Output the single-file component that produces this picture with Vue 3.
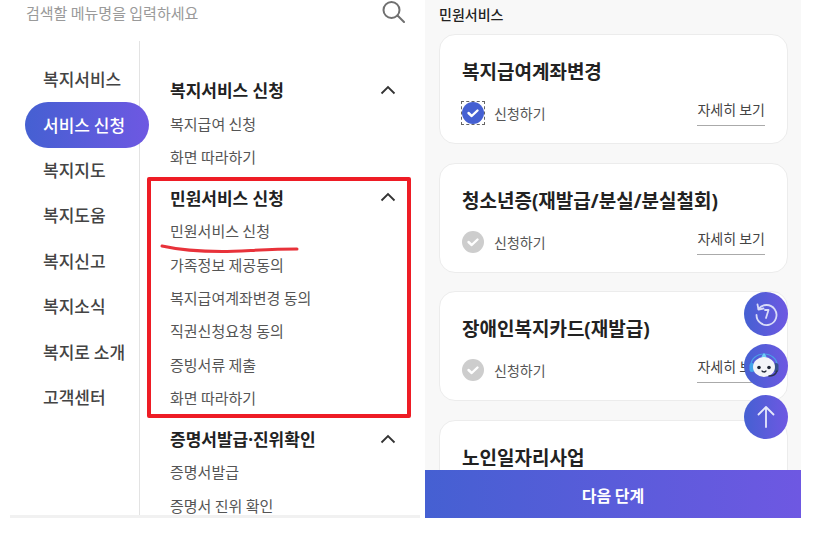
<script setup>
const sideMenu = ['복지서비스', '서비스 신청', '복지지도', '복지도움', '복지신고', '복지소식', '복지로 소개', '고객센터']

const groups = [
  { title: '복지서비스 신청', items: ['복지급여 신청', '화면 따라하기'] },
  {
    title: '민원서비스 신청',
    items: ['민원서비스 신청', '가족정보 제공동의', '복지급여계좌변경 동의', '직권신청요청 동의', '증빙서류 제출', '화면 따라하기'],
  },
  { title: '증명서발급·진위확인', items: ['증명서발급', '증명서 진위 확인'] },
]

const cards = [
  { title: '복지급여계좌변경', checked: true },
  { title: '청소년증(재발급/분실/분실철회)', checked: false },
  { title: '장애인복지카드(재발급)', checked: false },
  { title: '노인일자리사업', checked: false },
]
</script>

<template>
  <main class="page">
    <!-- Menu panel -->
    <section class="menu">
      <div class="search">
        <span class="placeholder">검색할 메뉴명을 입력하세요</span>
        <svg class="search-icon" width="23" height="22" viewBox="0 0 23 22" fill="none" stroke="#707070" stroke-width="2">
          <circle cx="9.500" cy="9" r="8" />
          <path d="M15.500 14.500l6.500 6.500" stroke-linecap="round" />
        </svg>
      </div>
      <div class="menu-body">
        <ul class="side">
          <li v-for="(m, i) in sideMenu" :key="m" class="side-item" :class="{ active: i === 1 }">{{ m }}</li>
        </ul>
        <div class="subs">
          <div v-for="g in groups" :key="g.title" class="group">
            <div class="group-title">
              <span>{{ g.title }}</span>
              <svg width="16" height="10" viewBox="0 0 16 10" fill="none" stroke="#333" stroke-width="1.800">
                <path d="M1.500 8.500L8 2l6.500 6.500" />
              </svg>
            </div>
            <div v-for="item in g.items" :key="item" class="group-item">{{ item }}</div>
          </div>
        </div>
      </div>
      <!-- Red annotation drawn over the menu -->
      <div class="red-box"></div>
      <svg class="red-line" width="140" height="12" viewBox="0 0 140 12" fill="none">
        <path d="M2 3C20 7 42 8.500 62 8.500S105 6 137 6" stroke="#e8323a" stroke-width="3" stroke-linecap="round" />
      </svg>
    </section>

    <!-- Service panel -->
    <section class="service">
      <h2 class="service-title">민원서비스</h2>
      <div class="cards">
        <article v-for="c in cards" :key="c.title" class="card">
          <h3>{{ c.title }}</h3>
          <div class="card-foot">
            <label class="apply">
              <span class="check" :class="{ on: c.checked }">
                <svg width="22" height="22" viewBox="0 0 22 22">
                  <circle cx="11" cy="11" r="11" :fill="c.checked ? '#4560d2' : '#cdcdcd'" />
                  <path d="M6.500 11l3.200 3 5.800-5.500" fill="none" stroke="#fff" stroke-width="2.400" stroke-linecap="round" stroke-linejoin="round" />
                </svg>
              </span>
              신청하기
            </label>
            <a class="more">자세히 보기</a>
          </div>
        </article>
      </div>

      <div class="fabs">
        <button class="fab" aria-label="최근 이력">
          <svg width="26" height="26" viewBox="0 0 26 26" fill="none" stroke="#d9dcf8" stroke-width="1.800" stroke-linecap="round" stroke-linejoin="round">
            <path d="M5.500 8A10 10 0 1 1 3.500 14" />
            <path d="M4.500 3.500L5.500 8.500L10.500 7.500" />
            <path d="M12 9h3.500L13 17" />
          </svg>
        </button>
        <button class="fab" aria-label="상담 챗봇">
          <svg width="44" height="44" viewBox="0 0 44 44">
            <path d="M7 21a13 11 0 0 1 26 0" fill="none" stroke="#4aa0e8" stroke-width="1.200" />
            <rect x="5.500" y="19" width="5" height="9" rx="2.500" fill="#43a5ea" />
            <rect x="29.500" y="19" width="5" height="9" rx="2.500" fill="#37508c" />
            <path d="M20 9c1.500 2 2.500 3 2.500 4.500a2.500 2.500 0 0 1-5 0C17.500 12 18.500 11 20 9z" fill="#6fd0f5" />
            <ellipse cx="20" cy="23" rx="11" ry="10" fill="#f3f4f8" />
            <circle cx="15" cy="23.500" r="1.800" fill="#222838" />
            <circle cx="25" cy="23.500" r="1.800" fill="#222838" />
            <path d="M18 27q2 2 4 0" fill="none" stroke="#222838" stroke-width="1.200" stroke-linecap="round" />
            <path d="M33 27q-2 5-8 5" fill="none" stroke="#2b3350" stroke-width="1.600" stroke-linecap="round" />
          </svg>
        </button>
        <button class="fab" aria-label="맨 위로">
          <svg width="26" height="26" viewBox="0 0 26 26" fill="none" stroke="#e6e8fb" stroke-width="1.800" stroke-linecap="round" stroke-linejoin="round">
            <path d="M13 23V3M5.500 10.500L13 3l7.500 7.500" />
          </svg>
        </button>
      </div>

      <button class="next">다음 단계</button>
    </section>
  </main>
</template>

<style scoped>
.page {
  position: relative;
  display: flex;
  width: 822px;
  height: 540px;
  overflow: hidden;
  background: #fff;
  font-family: 'Noto Sans CJK KR', 'Noto Sans', sans-serif;
}

.menu {
  position: relative;
  width: 410px;
  height: 515px;
  margin-left: 10px;
  border-bottom: 3px solid #f1f1f1;
  box-sizing: content-box;
  overflow: hidden;
}

.search {
  display: flex;
  align-items: center;
  justify-content: space-between;
  height: 26px;
  padding: 0 15px 0 16px;
  margin-bottom: 15px;
}

.placeholder {
  margin-top: -2px;
  font-size: 15px;
  color: #9a9a9a;
}

.search-icon {
  margin-top: -3px;
}

.menu-body {
  display: flex;
  height: 474px;
}

.side {
  width: 130px;
  margin: 0;
  padding: 16px 0 0;
  list-style: none;
  border-right: 1px solid #e3e3e3;
  box-sizing: border-box;
}

.side-item {
  display: flex;
  align-items: center;
  width: 124px;
  height: 45.400px;
  margin-left: 15px;
  padding: 0 0 2px 18px;
  box-sizing: border-box;
  font-size: 17px;
  font-weight: 500;
  color: #444;
}

.side-item.active {
  border-radius: 23px;
  background: linear-gradient(90deg, #4560d2, #6e58e2);
  color: #fff;
}

.subs {
  flex: 1;
  padding: 32px 0 0 30px;
  overflow: hidden;
}

.group {
  margin-bottom: 7.500px;
}

.group-title {
  display: flex;
  align-items: center;
  justify-content: space-between;
  height: 33.400px;
  padding-right: 24px;
  font-family: 'Noto Sans', 'Noto Sans CJK KR', sans-serif;
  font-size: 17px;
  font-weight: 700;
  color: #222;
}

.group-item {
  display: flex;
  align-items: center;
  height: 33.400px;
  font-size: 15px;
  color: #555;
}

.red-box {
  position: absolute;
  left: 137px;
  top: 177px;
  width: 264px;
  height: 241px;
  box-sizing: border-box;
  border: 4px solid #ee1c25;
  border-radius: 2px;
}

.red-line {
  position: absolute;
  left: 150px;
  top: 243px;
}

.service {
  position: relative;
  width: 376px;
  height: 518px;
  margin-left: 5px;
  padding: 0 13px 0 14px;
  box-sizing: border-box;
  overflow: hidden;
  background: #f8f8f8;
}

.service-title {
  margin: 4px 0 9px;
  font-size: 14px;
  font-weight: 500;
  line-height: 21px;
  color: #222;
}

.cards {
  display: flex;
  flex-direction: column;
  gap: 18.500px;
}

.card {
  height: 110px;
  flex: none;
  padding: 23px 22px 0;
  box-sizing: border-box;
  background: #fff;
  border: 1px solid #ececec;
  border-radius: 16px;
}

.card h3 {
  margin: 0;
  font-family: 'Noto Sans', 'Noto Sans CJK KR', sans-serif;
  font-size: 19px;
  font-weight: 700;
  line-height: 28px;
  color: #222;
}

.card-foot {
  display: flex;
  align-items: flex-start;
  justify-content: space-between;
  margin-top: 13px;
}

.apply {
  display: flex;
  align-items: center;
  gap: 10px;
  margin-top: 3px;
  font-size: 14px;
  color: #555;
}

.check {
  display: block;
  width: 22px;
  height: 22px;
}

.check svg {
  display: block;
}

.check.on {
  outline: 1px dashed #666;
}

.more {
  padding-bottom: 5px;
  border-bottom: 1.500px solid #aaa;
  font-size: 14px;
  line-height: 21px;
  color: #444;
}

.fabs {
  position: absolute;
  right: 13px;
  top: 292px;
  display: flex;
  flex-direction: column;
  gap: 7.500px;
}

.fab {
  display: flex;
  align-items: center;
  justify-content: center;
  width: 44px;
  height: 44px;
  padding: 0;
  border: none;
  border-radius: 50%;
  background: linear-gradient(90deg, #4560d2, #6e58e2);
}

.next {
  position: absolute;
  left: 0;
  right: 0;
  bottom: 0;
  height: 48px;
  padding-top: 3px;
  border: none;
  background: linear-gradient(90deg, #4560d2, #6e58e2);
  font-family: inherit;
  font-size: 16px;
  font-weight: 700;
  color: #fff;
}
</style>
